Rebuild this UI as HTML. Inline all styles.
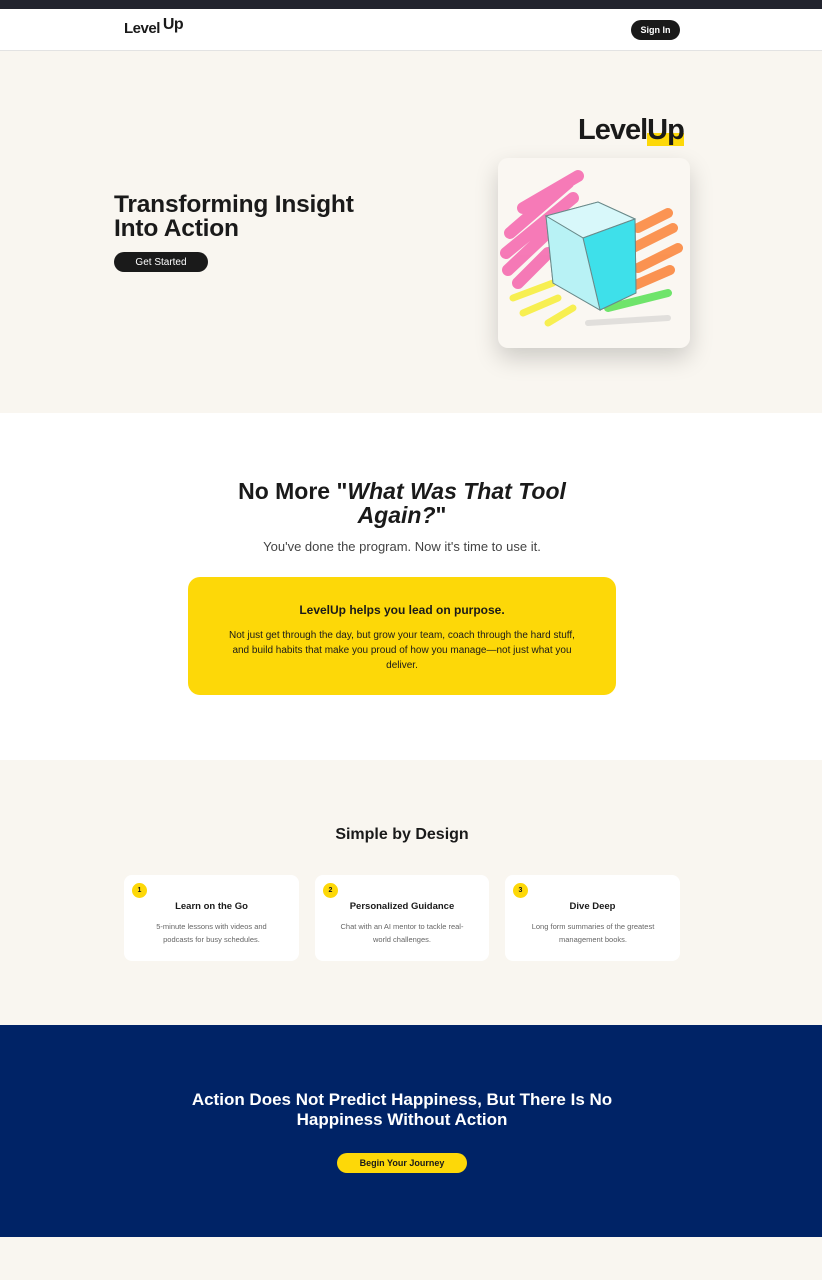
<!DOCTYPE html>
<html><head><meta charset="utf-8"><style>
*{margin:0;padding:0;box-sizing:border-box}
body{width:822px;height:1280px;overflow:hidden;font-family:"Liberation Sans",sans-serif;background:#f9f6f0;color:#1a1a1a;position:relative}
.a{position:absolute}
.c{text-align:center}
</style></head><body>
<div class="a" style="left:0;top:0;width:822px;height:9px;background:#22242e"></div>
<div class="a" style="left:0;top:9px;width:822px;height:42px;background:#fff;border-bottom:1px solid #e3e3e3"></div>
<div class="a" style="left:124px;top:20px;font-weight:bold;font-size:15px;letter-spacing:-0.5px">Level<span style="position:relative;top:-4px;margin-left:3px;font-size:16px">Up</span></div>
<div class="a c" style="left:631px;top:20px;width:49px;height:20px;background:#1a1a1a;border-radius:10px;color:#fff;font-size:9px;font-weight:bold;line-height:20px">Sign In</div>

<div class="a" style="left:114px;top:193px;font-size:24.5px;font-weight:bold;line-height:24px;letter-spacing:-0.2px">Transforming Insight<br>Into Action</div>
<div class="a c" style="left:114px;top:252px;width:94px;height:20px;background:#1a1a1a;border-radius:10px;color:#fff;font-size:10px;line-height:21px">Get Started</div>
<div class="a" style="left:578px;top:114px;font-size:29px;font-weight:900;letter-spacing:-1px">Level<span style="background:linear-gradient(transparent 60%,#fdd808 60%)">Up</span></div>
<div class="a" style="left:498px;top:158px;width:192px;height:190px;background:#faf7f2;border-radius:10px;box-shadow:0 10px 24px rgba(0,0,0,.18);overflow:hidden">
<svg width="192" height="190" viewBox="0 0 192 190">
<g stroke-linecap="round" fill="none" opacity=".8">
<path d="M12 75 L70 25 M8 95 L75 40 M10 112 L60 65 M20 125 L50 95 M25 50 L80 18" stroke="#f55aa8" stroke-width="12"/>
<path d="M140 70 L170 55 M135 90 L175 70 M140 110 L180 90 M135 128 L172 112" stroke="#fb7a2a" stroke-width="10"/>
<path d="M15 140 L55 125 M25 155 L60 140 M50 165 L75 150" stroke="#f7ee2a" stroke-width="7"/>
<path d="M110 150 L170 135" stroke="#4de04a" stroke-width="8"/>
<path d="M90 165 L170 160" stroke="#bbb" stroke-width="6" opacity=".5"/>
</g>
<path d="M48 58 L100 44 L137 61 L138 135 L102 152 L55 125 Z" fill="#9ff0f5" stroke="#6a8a8a"/>
<path d="M48 58 L100 44 L137 61 L85 80 Z" fill="#d8f8fa" stroke="#6a8a8a"/>
<path d="M85 80 L137 61 L138 135 L102 152 Z" fill="#3ee0ea" stroke="#6a8a8a"/>
<path d="M48 58 L85 80 L102 152 L55 125 Z" fill="#b8f2f5" stroke="#6a8a8a"/>
</svg></div>

<div class="a" style="left:0;top:413px;width:822px;height:347px;background:#fff"></div>
<div class="a c" style="left:200px;top:479px;width:404px;font-size:23px;font-weight:bold;line-height:24px">No More "<i>What Was That Tool Again?</i>"</div>
<div class="a c" style="left:0;top:539px;width:804px;font-size:13px;color:#444">You've done the program. Now it's time to use it.</div>
<div class="a c" style="left:188px;top:577px;width:428px;height:118px;background:#fdd808;border-radius:12px;padding:26px 34px 0">
<div style="font-size:12px;font-weight:bold">LevelUp helps you lead on purpose.</div>
<div style="font-size:10px;line-height:15px;margin-top:11px">Not just get through the day, but grow your team, coach through the hard stuff, and build habits that make you proud of how you manage—not just what you deliver.</div></div>

<div class="a c" style="left:0;top:826px;width:804px;font-size:16px;font-weight:bold">Simple by Design</div>
<div class="a" style="left:124px;top:875px;width:175px;height:86px;background:#fff;border-radius:8px"></div>
<div class="a" style="left:315px;top:875px;width:174px;height:86px;background:#fff;border-radius:8px"></div>
<div class="a" style="left:505px;top:875px;width:175px;height:86px;background:#fff;border-radius:8px"></div>
<div class="a c" style="left:132px;top:883px;width:15px;height:15px;border-radius:50%;background:#fdd808;font-size:7px;font-weight:bold;line-height:15px">1</div>
<div class="a c" style="left:323px;top:883px;width:15px;height:15px;border-radius:50%;background:#fdd808;font-size:7px;font-weight:bold;line-height:15px">2</div>
<div class="a c" style="left:513px;top:883px;width:15px;height:15px;border-radius:50%;background:#fdd808;font-size:7px;font-weight:bold;line-height:15px">3</div>
<div class="a c" style="left:124px;top:901px;width:175px;font-size:9.5px;font-weight:bold">Learn on the Go</div>
<div class="a c" style="left:315px;top:901px;width:174px;font-size:9.5px;font-weight:bold">Personalized Guidance</div>
<div class="a c" style="left:505px;top:901px;width:175px;font-size:9.5px;font-weight:bold">Dive Deep</div>
<div class="a c" style="left:144px;top:920px;width:135px;font-size:7.5px;line-height:13px;color:#666">5-minute lessons with videos and podcasts for busy schedules.</div>
<div class="a c" style="left:332px;top:920px;width:140px;font-size:7.5px;line-height:13px;color:#666">Chat with an AI mentor to tackle real-world challenges.</div>
<div class="a c" style="left:522px;top:920px;width:142px;font-size:7.5px;line-height:13px;color:#666">Long form summaries of the greatest management books.</div>

<div class="a" style="left:0;top:1025px;width:822px;height:212px;background:#002366"></div>
<div class="a c" style="left:170px;top:1090px;width:464px;font-size:17px;font-weight:bold;line-height:20px;color:#fff">Action Does Not Predict Happiness, But There Is No Happiness Without Action</div>
<div class="a c" style="left:337px;top:1153px;width:130px;height:20px;background:#fdd808;border-radius:10px;font-size:9px;font-weight:bold;line-height:20px">Begin Your Journey</div>
</body></html>
